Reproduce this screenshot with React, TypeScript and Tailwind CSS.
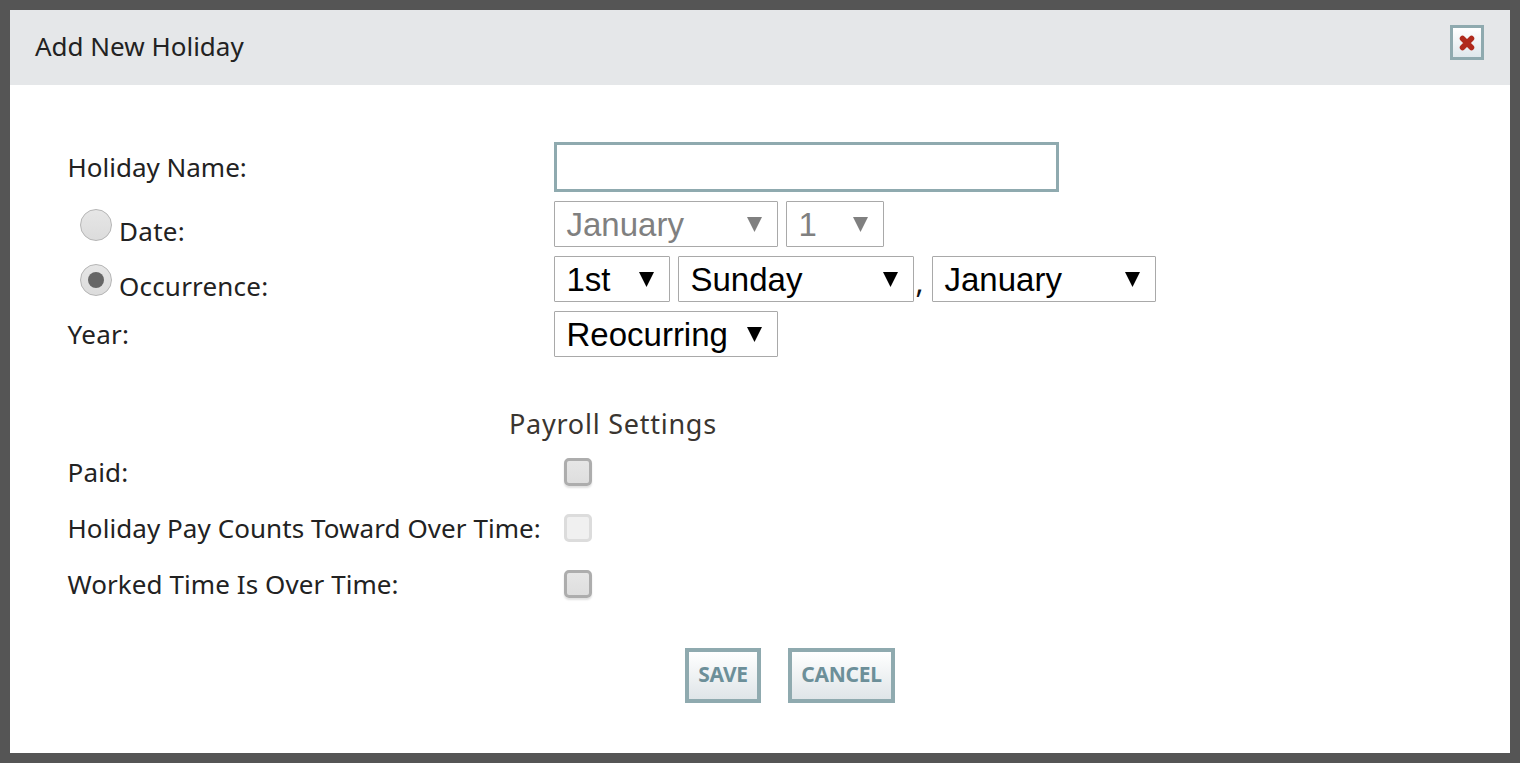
import type { ReactNode } from "react";

const uiFont = "font-['Noto_Sans','Open_Sans',sans-serif]";

function Select({ value, width, disabled }: { value: string; width: string; disabled?: boolean }) {
  return (
    <div
      className={`${width} h-[46px] flex items-center justify-between pl-[11.5px] pr-[15px] bg-white border border-[#a9a9a9] rounded-[1px] font-['Liberation_Sans',sans-serif] text-[33px] leading-none ${
        disabled ? "text-[#808080]" : "text-black"
      }`}
    >
      <span>{value}</span>
      <svg width="15" height="15" viewBox="0 0 15 15" className="shrink-0">
        <path d="M0 0h15L7.5 15z" fill="currentColor" />
      </svg>
    </div>
  );
}

function Radio({ checked }: { checked?: boolean }) {
  return (
    <span className="w-[32px] h-[32px] mt-[8px] rounded-full border-[1.5px] border-[#b5b5b5] bg-gradient-to-b from-[#e6e6e6] to-[#dcdcdc] flex items-center justify-center">
      {checked && <span className="w-[16px] h-[16px] rounded-full bg-[#666666]" />}
    </span>
  );
}

function Checkbox({ disabled }: { disabled?: boolean }) {
  return (
    <span
      className={`block w-[28px] h-[28px] ml-[10px] rounded-[5px] border-[3px] ${
        disabled
          ? "border-[#dcdcdc] bg-[#f0f0f0]"
          : "border-[#adadad] bg-gradient-to-b from-[#e6e6e6] to-[#dedede] shadow-[0_2px_2px_rgba(0,0,0,0.12)]"
      }`}
    />
  );
}

function Row({ label, children, className }: { label: ReactNode; children: ReactNode; className: string }) {
  return (
    <div className={`flex ${className}`}>
      <div className="w-[486px] flex items-center">{label}</div>
      <div className="flex items-center">{children}</div>
    </div>
  );
}

function ActionButton({ label, width }: { label: string; width: string }) {
  return (
    <button
      className={`${width} h-[55px] pb-[2px] border-[4px] border-[#8faaaf] bg-gradient-to-b from-white to-[#dfe5e8] text-[#6c8f99] text-[21px] font-bold tracking-[-0.3px]`}
    >
      {label}
    </button>
  );
}

export default function App() {
  return (
    <main className={`w-[1520px] h-[763px] bg-[#555555] p-[10px] overflow-hidden text-[#222222] ${uiFont}`}>
      <div className="h-[743px] bg-white">
        {/* Header */}
        <div className="h-[75px] bg-[#e5e7e9] flex items-center justify-between pl-[25px] pr-[26px]">
          <h1 className="text-[26px] font-normal mb-[2px]">Add New Holiday</h1>
          <button className="w-[34px] h-[35px] mb-[10px] border-[3px] border-[#8faaaf] bg-gradient-to-b from-white to-[#dfe8ec] flex items-center justify-center">
            <svg width="16" height="16" viewBox="0 0 16 16">
              <path d="M3.5 3.5 12.5 12.5M12.5 3.5 3.5 12.5" stroke="#b02a1c" strokeWidth="5.5" strokeLinecap="round" />
            </svg>
          </button>
        </div>

        {/* Form */}
        <div className="pt-[57px] pl-[58px] text-[26px]">
          <Row label={<span className="mt-[2px] -ml-[0.5px]">Holiday Name:</span>} className="h-[49px]">
            <input className="w-[505px] h-[50px] border-[3px] border-[#8faaaf] bg-white" />
          </Row>

          <Row
            className="h-[46px] mt-[10px]"
            label={
              <span className="flex items-start ml-[12px] h-[46px]">
                <Radio />
                <span className="ml-[7px] mt-[7px] leading-[46px] h-[46px] tracking-[0.3px]">Date:</span>
              </span>
            }
          >
            <Select value="January" width="w-[224px]" disabled />
            <div className="w-[8px]" />
            <Select value="1" width="w-[98px]" disabled />
          </Row>

          <Row
            className="h-[46px] mt-[9px]"
            label={
              <span className="flex items-start ml-[12px] h-[46px]">
                <Radio checked />
                <span className="ml-[7px] mt-[7px] leading-[46px] h-[46px] tracking-[0.2px]">Occurrence:</span>
              </span>
            }
          >
            <Select value="1st" width="w-[116px]" />
            <div className="w-[8px]" />
            <Select value="Sunday" width="w-[236px]" />
            <span className="w-[18px] pl-[1.5px] self-end leading-none mb-[5px] text-[30px] text-[#111111]">,</span>
            <Select value="January" width="w-[224px]" />
          </Row>

          <Row label={<span className="-ml-[0.5px] tracking-[0.3px]">Year:</span>} className="h-[46px] mt-[9px]">
            <Select value="Reocurring" width="w-[224px]" />
          </Row>

          {/* Payroll */}
          <div className="mt-[48px] ml-[441px] h-[38px] text-[27px] text-[#3a3530] leading-[38px] tracking-[0.75px]">Payroll Settings</div>

          <div className="mt-[15px] flex flex-col gap-[28px]">
            <Row label={<span className="mt-[1px] -ml-[0.5px] tracking-[0.2px]">Paid:</span>} className="h-[28px]">
              <Checkbox />
            </Row>
            <Row label={<span className="mt-[1px] -ml-[0.5px] tracking-[0.07px]">Holiday Pay Counts Toward Over Time:</span>} className="h-[28px]">
              <Checkbox disabled />
            </Row>
            <Row label={<span className="mt-[1px] -ml-[0.5px] tracking-[0.08px]">Worked Time Is Over Time:</span>} className="h-[28px]">
              <Checkbox />
            </Row>
          </div>

          {/* Buttons */}
          <div className="mt-[50px] ml-[617px] flex gap-[27px]">
            <ActionButton label="SAVE" width="w-[76px]" />
            <ActionButton label="CANCEL" width="w-[107px]" />
          </div>
        </div>
      </div>
    </main>
  );
}
